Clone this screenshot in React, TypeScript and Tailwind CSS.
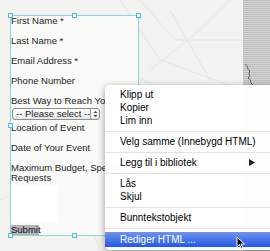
import React from "react";

const Handle = ({ x, y }: { x: number; y: number }) => (
  <div
    className="absolute w-[5px] h-[5px] border border-[#52bcd6] bg-[#eef8fb]"
    style={{ left: x - 2, top: y - 2 }}
  />
);

const Sep = () => (
  <div className="h-[8px] flex items-center">
    <div className="h-px w-full bg-[#e2e2e2]" />
  </div>
);

const Item = ({ children }: { children: React.ReactNode }) => (
  <div className="h-[13px] leading-[13px] pl-[15px] text-black">{children}</div>
);

const Label = ({ children }: { children: React.ReactNode }) => (
  <div className="h-[12px] leading-[12px] whitespace-nowrap shrink-0">{children}</div>
);

const Gap = () => <div className="h-[8px] shrink-0" />;

export default function App() {
  return (
    <div
      className="relative w-[270px] h-[251px] overflow-hidden bg-[#f2f2ef] flex"
      style={{ fontFamily: '"Liberation Sans", Arial, sans-serif' }}
    >
      {/* faint map texture */}
      <svg className="absolute left-0 top-0" width="243" height="251" viewBox="0 0 243 251">
        <g stroke="#e4e4e0" strokeWidth="1" fill="none">
          <path d="M120 0 L160 60 L243 90" />
          <path d="M140 0 L175 40 L243 40" />
          <path d="M150 70 L200 30 L230 0" />
          <path d="M110 60 L243 140" />
          <path d="M170 10 L210 80" />
          <path d="M0 200 L60 170 L105 210" />
          <path d="M60 140 L100 250" />
        </g>
      </svg>

      {/* form column */}
      <div className="relative w-[243px] shrink-0">
        <div className="w-[128px] ml-[10px] mt-[15px] pl-[1px] flex flex-col text-[9.5px] text-[#1e1e1e] bg-[#f9f9f8] h-[221px]">
          <Label>First Name *</Label>
          <Gap />
          <Label>Last Name *</Label>
          <Gap />
          <Label>Email Address *</Label>
          <Gap />
          <Label>Phone Number</Label>
          <Gap />
          <Label>Best Way to Reach You</Label>
          <div className="shrink-0 mt-[1px] ml-[1px] w-[88px] h-[12px] flex rounded-[3px] border border-[#8e8e8e] bg-gradient-to-b from-white to-[#e6e6e6] overflow-hidden">
            <div className="flex-1 leading-[10px] pl-[3px] text-[9.5px] whitespace-nowrap">-- Please select --</div>
            <div className="w-[9px] border-l border-[#a8a8a8] flex flex-col items-center justify-center">
              <svg width="5" height="8" viewBox="0 0 5 8">
                <path d="M0.5 3 L2.5 1 L4.5 3 Z M0.5 5 L2.5 7 L4.5 5 Z" fill="#444" />
              </svg>
            </div>
          </div>
          <div className="h-[2px] shrink-0" />
          <Label>Location of Event</Label>
          <Gap />
          <Label>Date of Your Event</Label>
          <Gap />
          <div className="leading-[10px] whitespace-nowrap pt-[1px] shrink-0">
            Maximum Budget, Special
            <br />
            Requests
          </div>
          <div className="shrink-0 w-[47px] h-[38px] mt-[2px] bg-white" />
          <div className="shrink-0 mt-[2px] h-[10px] w-[28px] leading-[10px] bg-[#b4b4b4] text-[#111]">Submit</div>
        </div>
      </div>

      {/* right textured strip */}
      <div className="relative flex-1 h-full bg-[repeating-linear-gradient(0deg,#bebebb_0px,#bebebb_1px,#d3d3d0_1px,#d3d3d0_2px)]">
        <svg className="absolute left-0 top-[62px]" width="20" height="24" viewBox="0 0 20 24">
          <path d="M2 2 C6 4 3 7 7 9 C4 12 9 13 5 16 C9 18 6 20 10 23" stroke="#555" strokeWidth="1" fill="none" />
        </svg>
      </div>

      {/* selection box */}
      <div className="absolute left-[10px] top-[15px] w-[129px] h-[221px] border border-[#8fd3e4] pointer-events-none" />
      <Handle x={10} y={15} />
      <Handle x={74} y={15} />
      <Handle x={138} y={15} />
      <Handle x={10} y={125} />
      <Handle x={10} y={235} />
      <Handle x={74} y={235} />

      {/* context menu */}
      <div className="absolute left-[105px] top-[85px] w-[170px] h-[165px] rounded-[5px] bg-[rgba(255,255,255,0.96)] shadow-[0_2px_7px_rgba(0,0,0,0.4)] pt-[3px] text-[10px] flex flex-col">
        <Item>Klipp ut</Item>
        <Item>Kopier</Item>
        <Item>Lim inn</Item>
        <Sep />
        <Item>Velg samme (Innebygd HTML)</Item>
        <Sep />
        <div className="h-[13px] leading-[13px] pl-[15px] pr-[20px] flex justify-between items-center text-black">
          <span>Legg til i bibliotek</span>
          <svg width="6" height="7" viewBox="0 0 6 7">
            <path d="M0 0 L6 3.5 L0 7 Z" fill="#222" />
          </svg>
        </div>
        <Sep />
        <Item>Lås</Item>
        <Item>Skjul</Item>
        <Sep />
        <Item>Bunntekstobjekt</Item>
        <Sep />
        <div className="h-[15px] leading-[15px] pl-[15px] text-white bg-gradient-to-b from-[#6d93f2] to-[#2459e0]">
          Rediger HTML ...
        </div>
      </div>

      {/* cursor */}
      <svg className="absolute left-[236px] top-[236px]" width="10" height="14" viewBox="0 0 10 14">
        <path d="M1 1 L1 11 L3.5 8.5 L5.5 13 L7 12.3 L5 8 L8.5 8 Z" fill="#000" stroke="#fff" strokeWidth="1" strokeLinejoin="round" />
      </svg>
    </div>
  );
}
